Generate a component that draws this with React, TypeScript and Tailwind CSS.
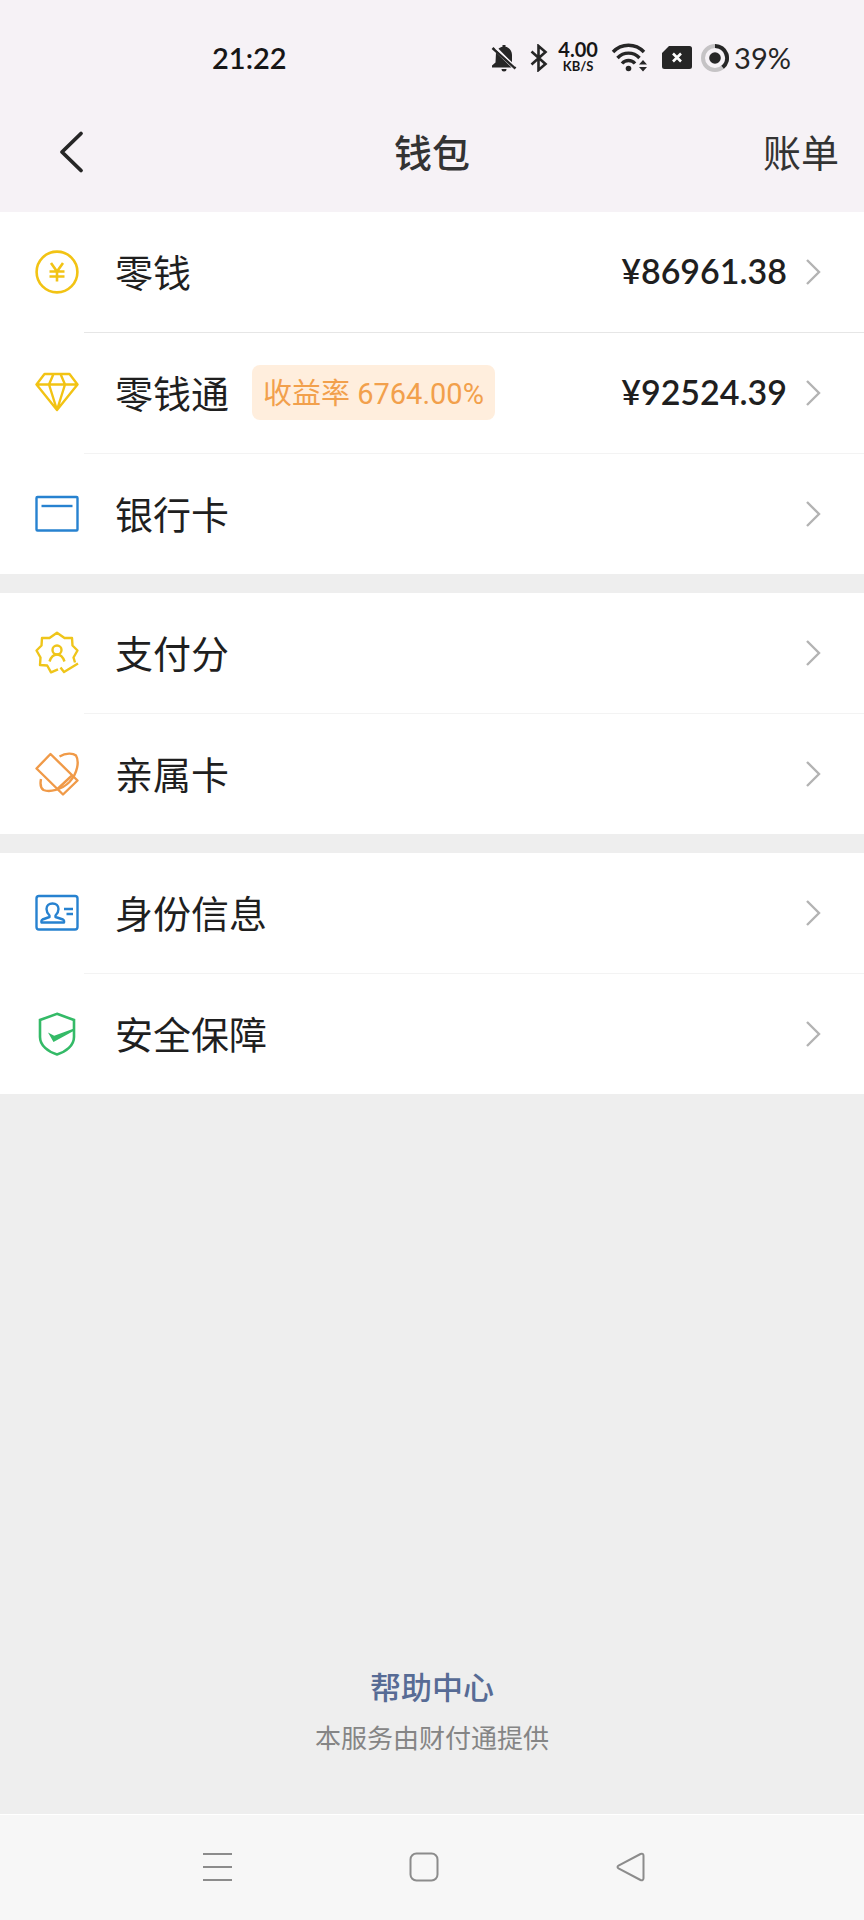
import type { ReactNode } from 'react'

const svgBase = {
  width: 44,
  height: 44,
  viewBox: '0 0 44 44',
  fill: 'none',
  strokeWidth: 2.4,
  strokeLinejoin: 'round' as const,
  'aria-hidden': true,
}

function CoinIcon() {
  return (
    <svg {...svgBase} stroke="#f2c314">
      <circle cx="22" cy="22" r="20.4" strokeWidth="2.6" />
      <path d="M16 13l6 8.500 6-8.500M22 21.500v10M14.500 21.500h15M14.500 26.500h15" strokeWidth="2.600" />
    </svg>
  )
}

function DiamondIcon() {
  return (
    <svg {...svgBase} stroke="#f2c314">
      <path d="M9.500 3H34.500L42.500 13.500 22 39 1.500 13.500z M1.500 13.500H42.500 M18.500 3L14 13.500l8 25.500 8-25.500-4.500-10.500" />
    </svg>
  )
}

function BankCardIcon() {
  return (
    <svg {...svgBase} stroke="#2782d0">
      <rect x="1.500" y="5" width="41" height="33.500" rx="1" />
      <path d="M6.500 14h31" />
    </svg>
  )
}

function ScoreIcon() {
  return (
    <svg {...svgBase} stroke="#efc51a">
      <path d="M23 38.300l-7 3-3.800-6.800-7.200-.5.500-7.500L1.500 19.500l5-5L7 7h7.500L22 1.700 29.500 7H37l.5 7.500 5 5-4 7 1.500 5M25.500 36.500l3.500 4.500 14-8.500" />
      <circle cx="22" cy="19" r="4.500" />
      <path d="M14.500 30.500c1.500-4.500 4-7 7.500-7s6 2.500 7.500 7" />
    </svg>
  )
}

function FamilyCardIcon() {
  return (
    <svg {...svgBase} stroke="#f09a48">
      <path d="M1.500 16.500L15.500 2 42.500 28.500 28 42.500z M22.500 37L37.500 23" />
      <path d="M24.500 4.500C31 .8 38 1 41 3.500c3.500 6 1.500 18-6.500 26.500-8 8-20 10.500-26 8C5.500 36 5 32 6 27" />
    </svg>
  )
}

function IdentityIcon() {
  return (
    <svg {...svgBase} stroke="#2782d0">
      <rect x="1.500" y="5" width="41" height="33.500" rx="2.500" />
      <path d="M14.500 24.500c-2-2-3-4-3-6.500 0-3.500 2.500-5.500 6-5.500s6 2 6 5.500c0 2.500-1 4.500-3 6.500v1.500l7.500 2.500c1 .5 1.300 1.500 1 3H6.500c-.3-1.500 0-2.500 1-3l7-2.500z" />
      <path d="M29 18h9M31.500 23h6.500" />
    </svg>
  )
}

function ShieldIcon() {
  return (
    <svg {...svgBase} stroke="#34ba67">
      <path d="M22 1.800L39 8v17c0 8.500-8 14.800-17 17.500C13 39.800 5 33.500 5 25V8z" strokeWidth="2.600" strokeLinejoin="miter" />
      <path d="M13 20.500l6.200 3.200L39 16.500v2.200L18.500 30z" fill="#34ba67" stroke="none" />
    </svg>
  )
}

type Item = { label: string; icon: ReactNode; amount?: string; tag?: string }

const groups: Item[][] = [
  [
    { label: '零钱', icon: <CoinIcon />, amount: '¥86961.38' },
    { label: '零钱通', icon: <DiamondIcon />, amount: '¥92524.39', tag: '收益率 6764.00%' },
    { label: '银行卡', icon: <BankCardIcon /> },
  ],
  [
    { label: '支付分', icon: <ScoreIcon /> },
    { label: '亲属卡', icon: <FamilyCardIcon /> },
  ],
  [
    { label: '身份信息', icon: <IdentityIcon /> },
    { label: '安全保障', icon: <ShieldIcon /> },
  ],
]

function StatusBar() {
  return (
    <div className="flex h-[116px] items-center justify-between pr-[73px] pl-[212px] font-[Lato,sans-serif] text-[#262626]">
      <time className="pb-[2px] text-[29px] leading-none font-semibold text-[#161616]">21:22</time>
      <div className="flex items-center">
        <svg width="26" height="28" viewBox="0 0 26 28" fill="#262626" aria-label="静音">
          <path d="M7.500 4.800c1.200-1.200 2.500-1.800 4-2V1h3v1.800c4 .8 6.500 4 6.500 8.200v7.500z" />
          <path d="M5 8.500L20.500 23.500H1v-2L4.500 18.500z" />
          <path d="M10.500 25h5a2.500 2.500 0 01-5 0z" />
          <path d="M1.500 4l23 20.500" stroke="#262626" strokeWidth="2.600" />
          <path d="M4.500 4.200l20 18" stroke="#f6f2f6" strokeWidth="1.200" />
        </svg>
        <svg className="ml-[13px]" width="18" height="28" viewBox="0 0 18 28" fill="none" stroke="#262626" strokeWidth="2.600" aria-label="蓝牙">
          <path d="M1.500 7.500l14 12.500-7 6V2l7 6-14 12.500" />
        </svg>
        <div className="ml-[9px] flex w-[42px] flex-col items-center font-bold text-[#161616]">
          <span className="text-[20px] leading-[17px]">4.00</span>
          <span className="text-[13px] leading-[17px]">KB/S</span>
        </div>
        <svg className="ml-3" width="38" height="30" viewBox="0 0 38 30" fill="none" stroke="#262626" strokeWidth="3.400" aria-label="无线网络">
          <path d="M2 9c8.500-9 22.500-9 31 0M6.500 15c6-6.500 16-6.500 22 0M11 20.500c3.500-4 9.500-4 13 0" />
          <circle cx="17.500" cy="25.500" r="2.800" fill="#262626" stroke="none" />
          <path d="M28 21.500l4-4.500 4 4.500zM28 24l4 4.500 4-4.500z" fill="#262626" stroke="none" />
        </svg>
        <svg className="ml-3" width="32" height="26" viewBox="0 0 32 26" aria-label="无电话卡">
          <path d="M8 1h20.500A2.500 2.500 0 0131 3.500v18a2.500 2.500 0 01-2.500 2.500h-25A2.500 2.500 0 011 21.500V8z" fill="#262626" />
          <path d="M12 8.500l8 8M20 8.500l-8 8" stroke="#fff" strokeWidth="2.600" />
        </svg>
        <svg className="ml-2" width="28" height="28" viewBox="0 0 28 28" fill="none" strokeWidth="4" aria-label="电量">
          <circle cx="14" cy="14" r="12" stroke="#c5c3c5" />
          <path d="M14 2a12 12 0 017.600 21.300" stroke="#262626" />
          <circle cx="14" cy="14" r="5.800" fill="#262626" />
        </svg>
        <span className="ml-[5px] pb-[2px] text-[29px] leading-none">39%</span>
      </div>
    </div>
  )
}

function Row({ item, first, last }: { item: Item; first: boolean; last: boolean }) {
  return (
    <li>
      <a href="#" className="flex h-[120px] items-center pr-[41px] pl-[35px]">
        {item.icon}
        <span className="ml-9 pb-[2px] text-[38px] leading-none text-[#1f1f1f]">{item.label}</span>
        {item.tag && (
          <span className="mb-[2px] ml-[23px] flex h-[55px] items-center rounded-lg bg-[#ffeedd] px-[11px] pt-1 font-[Roboto,'Noto_Sans_CJK_SC',sans-serif] text-[29px] leading-none text-[#f2a04c]">
            {item.tag}
          </span>
        )}
        <span className="ml-auto pb-[2px] font-[Lato,sans-serif] text-[34px] leading-none font-semibold text-[#1f1f1f]">{item.amount}</span>
        <svg className="ml-4" width="20" height="28" viewBox="0 0 20 28" fill="none" stroke="#b3b3b3" strokeWidth="2.400" aria-hidden="true">
          <path d="M4 2l12 12L4 26" />
        </svg>
      </a>
      {!last && <div className={first ? 'ml-[84px] h-px bg-[#e6e6e6]' : 'ml-[84px] h-px bg-[#f3f3f3]'} />}
    </li>
  )
}

export default function App() {
  return (
    <div className="flex min-h-screen flex-col bg-[#eeeeee] font-['Noto_Sans_CJK_SC',sans-serif]">
      <header className="bg-[#f6f2f6]">
        <StatusBar />
        <div className="grid h-24 grid-cols-[1fr_auto_1fr] items-start pt-[14px] text-[#333333]">
          <button type="button" aria-label="返回" className="ml-14 justify-self-start">
            <svg width="30" height="44" viewBox="0 0 30 44" fill="none" stroke="#262626" strokeWidth="3.800" strokeLinecap="round" strokeLinejoin="round">
              <path d="M25 3.500L6 22l19 18.500" />
            </svg>
          </button>
          <h1 className="text-[38px] leading-[42px] font-medium">钱包</h1>
          <a href="#" className="mr-[25px] justify-self-end text-[38px] leading-[42px]">
            账单
          </a>
        </div>
      </header>
      <main className="flex flex-1 flex-col">
        <div className="flex flex-col gap-[19px]">
          {groups.map((group, g) => (
            <ul key={group[0].label} className="bg-white">
              {group.map((item, i) => (
                <Row key={item.label} item={item} first={g === 0 && i === 0} last={i === group.length - 1} />
              ))}
            </ul>
          ))}
        </div>
        <footer className="mt-auto flex flex-col items-center gap-[17px] pb-[61px]">
          <a href="#" className="text-[31px] leading-9 font-medium text-[#576b95]">
            帮助中心
          </a>
          <p className="text-[26px] leading-8 text-[#858585]">本服务由财付通提供</p>
        </footer>
      </main>
      <nav className="flex h-[106px] items-center justify-between border-t border-white bg-[#f7f7f7] pr-[218px] pb-px pl-[202px]">
        <button type="button" aria-label="最近任务">
          <svg width="30" height="30" viewBox="0 0 30 30" stroke="#8c8c8c" strokeWidth="2">
            <path d="M1 2h29M1 15h29M1 28h29" />
          </svg>
        </button>
        <button type="button" aria-label="主屏幕">
          <svg width="30" height="30" viewBox="0 0 30 30" fill="none" stroke="#8c8c8c" strokeWidth="2">
            <rect x="1.500" y="1.500" width="27" height="27" rx="6" />
          </svg>
        </button>
        <button type="button" aria-label="返回上一页">
          <svg width="30" height="30" viewBox="0 0 30 30" fill="none" stroke="#8c8c8c" strokeWidth="2">
            <path d="M2.500 13.700L24.500 2c1.600-.8 3 0 3 1.700v22.600c0 1.700-1.400 2.500-3 1.700L2.500 16.300c-1.300-.8-1.300-1.900 0-2.600z" />
          </svg>
        </button>
      </nav>
    </div>
  )
}
